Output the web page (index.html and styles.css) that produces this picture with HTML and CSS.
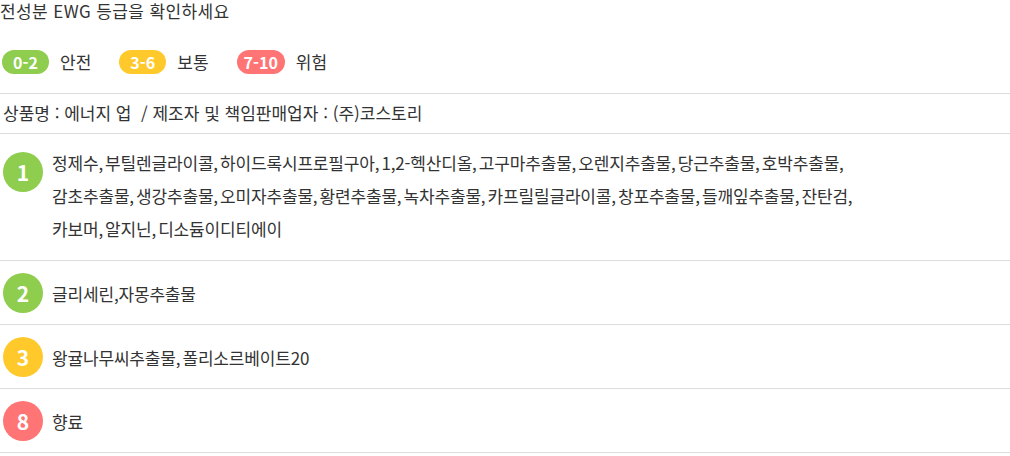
FILE: index.html
```html
<!DOCTYPE html>
<html lang="ko">
<head>
<meta charset="utf-8">
<link rel="stylesheet" href="styles.css">
</head>
<body>
<div class="ewg">
  <h2 class="title">전성분 EWG 등급을 확인하세요</h2>
  <div class="legend">
    <span class="pill green">0-2</span><span class="legend-label">안전</span>
    <span class="pill yellow">3-6</span><span class="legend-label">보통</span>
    <span class="pill red">7-10</span><span class="legend-label">위험</span>
  </div>
  <div class="product">상품명 : 에너지 업&nbsp; / 제조자 및 책임판매업자 : (주)코스토리</div>
  <ul class="grades">
    <li class="row multi">
      <span class="circle green">1</span>
      <p class="ingredients">정제수, 부틸렌글라이콜, 하이드록시프로필구아, 1,2-헥산디올, 고구마추출물, 오렌지추출물, 당근추출물, 호박추출물, 감초추출물, 생강추출물, 오미자추출물, 황련추출물, 녹차추출물, 카프릴릴글라이콜, 창포추출물, 들깨잎추출물, 잔탄검, 카보머, 알지닌, 디소듐이디티에이</p>
    </li>
    <li class="row">
      <span class="circle green">2</span>
      <p class="ingredients">글리세린,자몽추출물</p>
    </li>
    <li class="row">
      <span class="circle yellow">3</span>
      <p class="ingredients">왕귤나무씨추출물, 폴리소르베이트20</p>
    </li>
    <li class="row">
      <span class="circle red">8</span>
      <p class="ingredients">향료</p>
    </li>
  </ul>
</div>
</body>
</html>
```

FILE: styles.css
```css
* { box-sizing: border-box; }
body {
  margin: 0;
  background: #fff;
  color: #333;
  font-family: "Noto Sans CJK KR", "Noto Sans", sans-serif;
}
.ewg { width: 1010px; }
.title {
  margin: 0;
  font-size: 17px;
  font-weight: 400;
  line-height: 22px;
  letter-spacing: 0.4px;
}
.legend {
  display: flex;
  align-items: flex-start;
  padding: 28px 0 0 2px;
  height: 71px;
}
.pill {
  display: inline-block;
  min-width: 47px;
  height: 24px;
  line-height: 24px;
  padding: 0 7px;
  border-radius: 12px;
  color: #fff;
  font-weight: 700;
  font-size: 16px;
  text-align: center;
}
.legend-label {
  font-size: 17px;
  line-height: 24px;
  margin: 0 28px 0 11px;
}
.green { background: #8fcd4f; }
.yellow { background: #ffc92c; }
.red { background: #ff7474; }
.product {
  border-top: 1px solid #ddd;
  height: 40px;
  line-height: 38px;
  padding-left: 3px;
  font-size: 17px;
}
.grades {
  list-style: none;
  margin: 0;
  padding: 0;
}
.row {
  display: flex;
  align-items: center;
  border-top: 1px solid #ddd;
  padding: 12px 0 11px 3px;
}
.row:last-child { border-bottom: 1px solid #ddd; }
.row.multi {
  align-items: flex-start;
  padding: 12px 0 15px 3px;
}
.row.multi .ingredients { max-width: 820px; }
.row.multi .circle { margin-top: 6px; }
.circle {
  flex: none;
  width: 40px;
  height: 40px;
  border-radius: 50%;
  color: #fff;
  font-weight: 700;
  font-size: 21px;
  line-height: 40px;
  text-align: center;
}
.ingredients {
  margin: 0 0 0 9px;
  font-size: 17px;
  line-height: 33px;
  word-spacing: -2.5px;
  letter-spacing: -0.17px;
  word-break: keep-all;
}
```
